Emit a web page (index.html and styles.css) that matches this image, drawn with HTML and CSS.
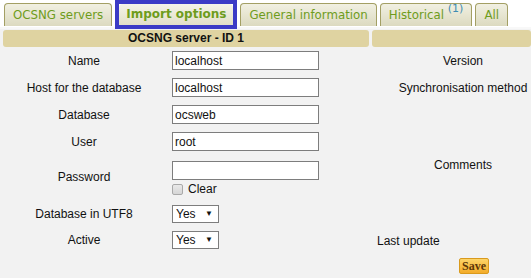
FILE: index.html
```html
<!DOCTYPE html>
<html lang="en">
<head>
    <meta charset="UTF-8">
    <title>OCSNG server</title>
    <link rel="stylesheet" href="styles.css">
</head>
<body>
    <div class="tabs">
        <a class="tab" href="#">OCSNG servers</a>
        <span class="tab-mark"><a class="tab current" href="#">Import options</a></span>
        <a class="tab" href="#">General information</a>
        <a class="tab" href="#">Historical <sup>(1)</sup></a>
        <a class="tab" href="#">All</a>
    </div>

    <div class="page">
        <!-- left part : server settings -->
        <div class="left">
            <div class="head">OCSNG server - ID 1</div>
            <div class="row">
                <label>Name</label>
                <input type="text" value="localhost">
            </div>
            <div class="row">
                <label>Host for the database</label>
                <input type="text" value="localhost">
            </div>
            <div class="row">
                <label>Database</label>
                <input type="text" value="ocsweb">
            </div>
            <div class="row">
                <label>User</label>
                <input type="text" value="root">
            </div>
            <div class="row pass">
                <label>Password</label>
                <div class="field">
                    <input type="password" value="">
                    <span class="clear"><input type="checkbox"> Clear</span>
                </div>
            </div>
            <div class="row utf">
                <label>Database in UTF8</label>
                <span class="choice"><select><option>Yes</option><option>No</option></select></span>
            </div>
            <div class="row act">
                <label>Active</label>
                <span class="choice"><select><option>Yes</option><option>No</option></select></span>
            </div>
        </div>

        <!-- right part -->
        <div class="right">
            <div class="head"></div>
            <div class="info version">Version</div>
            <div class="info sync">Synchronisation method</div>
            <div class="info comments">Comments</div>
            <div class="info update">Last update</div>
            <div class="save-row"><button class="save">Save</button></div>
        </div>
    </div>
</body>
</html>
```

FILE: styles.css
```css
body {
    margin: 0;
    background-color: #f2f2f2;
    font-family: "Liberation Sans", Arial, sans-serif;
    font-size: 12px;
    color: #111;
    overflow: hidden;
}

.tabs {
    display: flex;
    align-items: flex-end;
    gap: 3px;
    height: 27px;
    padding-left: 4px;
    background-color: #ffffff;
    border-bottom: 2px solid #f8f8f8;
}

.tab {
    display: block;
    height: 22px;
    line-height: 22px;
    padding: 0 8px;
    margin-bottom: 1px;
    border: 1px solid #a39f64;
    border-bottom: none;
    border-radius: 4px 4px 0 0;
    background: linear-gradient(#f1f0e2, #dcdac0);
    color: #6e9c1c;
    font-family: "DejaVu Sans", Verdana, sans-serif;
    font-size: 11.8px;
    text-decoration: none;
}

.tab sup {
    color: #3f8db3;
    font-size: 11px;
    line-height: 0;
    vertical-align: 7px;
}

.tab-mark {
    display: block;
    align-self: flex-start;
    border: 4px solid #3b3bc6;
    height: 21px;
}

.tab.current {
    height: 21px;
    line-height: 21px;
    margin: 0;
    padding: 0 7px;
    border: none;
    background: linear-gradient(#f4f3e8, #e2e0c8);
    font-weight: bold;
    font-size: 12px;
}

.page {
    display: flex;
    gap: 3px;
    padding-left: 3px;
    padding-top: 1px;
}

.head {
    height: 17px;
    line-height: 17px;
    background-color: #dfd3a1;
    border-radius: 3px;
    text-align: center;
    font-weight: bold;
}

.left {
    width: 366px;
    flex-shrink: 0;
}

.right {
    flex: 1;
    min-width: 0;
}

.row {
    display: grid;
    grid-template-columns: 162px 1fr;
    gap: 7px;
    align-items: center;
    height: 27px;
}

.row:first-of-type {
    margin-top: 3px;
}

.row label {
    text-align: center;
}

input[type="text"],
input[type="password"] {
    box-sizing: border-box;
    width: 147px;
    height: 19px;
    padding: 0 2px;
    border: 1px solid #7d7d7d;
    background-color: #ffffff;
    font-family: "Liberation Sans", Arial, sans-serif;
    font-size: 12px;
    color: #111;
}

.row.pass {
    height: 43px;
}

.field {
    display: flex;
    flex-direction: column;
    gap: 1px;
    padding-top: 5px;
}

.clear {
    display: flex;
    align-items: center;
    gap: 5px;
    height: 16px;
}

.clear input {
    appearance: none;
    margin: 0;
    width: 11px;
    height: 11px;
    border: 1px solid #a9a9a9;
    border-radius: 2px;
    background: linear-gradient(#e9e9e9, #d6d6d6);
}

.row.utf {
    height: 30px;
    margin-top: 1px;
}

.row.act {
    height: 22px;
}

.choice {
    position: relative;
    width: 47px;
}

.choice select {
    appearance: none;
    box-sizing: border-box;
    width: 47px;
    height: 18px;
    padding: 0 3px;
    border: 1px solid #7d7d7d;
    border-radius: 0;
    background-color: #ffffff;
    font-family: "Liberation Sans", Arial, sans-serif;
    font-size: 12px;
    color: #111;
}

.choice::after {
    content: "\25BC";
    position: absolute;
    right: 6px;
    top: 4px;
    font-size: 8px;
    color: #111;
    pointer-events: none;
}

.info {
    padding-left: 23px;
    text-align: center;
    white-space: nowrap;
}

.version {
    height: 25px;
    line-height: 25px;
    margin-top: 2px;
}

.sync {
    height: 28px;
    line-height: 28px;
}

.comments {
    margin-top: 49px;
    height: 28px;
    line-height: 28px;
}

.update {
    margin-top: 50px;
    text-align: left;
    padding-left: 5px;
    height: 24px;
    line-height: 24px;
}

.save-row {
    padding-left: 87px;
    padding-top: 5px;
}

.save {
    height: 16px;
    padding: 0 2px;
    border: 1px solid #d99a1d;
    border-radius: 2px;
    background: linear-gradient(#fcd468, #f3ac2a);
    color: #5a3608;
    font-family: "Liberation Serif", "Times New Roman", serif;
    font-weight: bold;
    font-size: 12px;
    line-height: 14px;
}
```
